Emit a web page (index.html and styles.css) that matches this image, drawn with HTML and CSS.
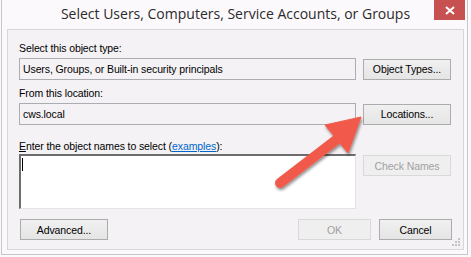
FILE: index.html
```html
<!DOCTYPE html>
<html lang="en">
<head>
  <meta charset="UTF-8">
  <title>Select Users, Computers, Service Accounts, or Groups</title>
  <link rel="stylesheet" href="styles.css">
</head>
<body>
  <div class="window">
    <div class="title-bar">
      <div class="title">Select Users, Computers, Service Accounts, or Groups</div>
      <div class="close-button">
        <svg width="10" height="9" viewBox="0 0 10 9"><path d="M1 1 L9 8 M9 1 L1 8" stroke="#fff" stroke-width="2"/></svg>
      </div>
    </div>

    <div class="panel">
      <div class="label">Select this object type:</div>
      <div class="row">
        <div class="field">Users, Groups, or Built-in security principals</div>
        <button class="btn">Object Types...</button>
      </div>

      <div class="label">From this location:</div>
      <div class="row">
        <div class="field">cws.local</div>
        <button class="btn">Locations...</button>
      </div>

      <div class="label label-names"><u>E</u>nter the object names to select (<a href="#">examples</a>):</div>
      <div class="row row-top">
        <div class="names-box"><span class="caret"></span></div>
        <button class="btn btn-disabled">Check Names</button>
      </div>

      <div class="footer">
        <button class="btn">Advanced...</button>
        <div class="footer-right">
          <button class="btn btn-small btn-disabled">OK</button>
          <button class="btn btn-small">Cancel</button>
        </div>
      </div>

      <!-- resize grip -->
      <svg class="grip" width="9" height="9" viewBox="0 0 9 9">
        <rect x="6" y="0" width="2" height="2" fill="#c4c4c4"/>
        <rect x="3" y="3" width="2" height="2" fill="#c4c4c4"/>
        <rect x="6" y="3" width="2" height="2" fill="#c4c4c4"/>
        <rect x="0" y="6" width="2" height="2" fill="#c4c4c4"/>
        <rect x="3" y="6" width="2" height="2" fill="#c4c4c4"/>
        <rect x="6" y="6" width="2" height="2" fill="#c4c4c4"/>
      </svg>
    </div>

    <!-- callout arrow pointing at Locations... -->
    <svg class="arrow" width="471" height="257" viewBox="0 0 471 257">
      <defs>
        <filter id="shadow" x="-20%" y="-20%" width="140%" height="140%">
          <feDropShadow dx="1" dy="2" stdDeviation="1.6" flood-color="#000" flood-opacity="0.45"/>
        </filter>
      </defs>
      <g filter="url(#shadow)" fill="#f15a4b" stroke="#f15a4b">
        <line x1="279" y1="183" x2="335" y2="140" stroke-width="10" stroke-linecap="round"/>
        <polygon points="360,117 347,153 324,125" stroke-width="1" stroke-linejoin="round"/>
      </g>
    </svg>
  </div>
</body>
</html>
```

FILE: styles.css
```css
body {
  margin: 0;
  background-color: #fcf9fc;
  font-family: "Liberation Sans", Arial, sans-serif;
  font-size: 10.5px;
  letter-spacing: -0.1px;
  color: #000;
}

.window {
  position: relative;
  width: 465px;
  height: 254px;
  margin-left: 1px;
  border: 1px solid #c9c6c9;
  border-top: none;
  background-color: #fcf9fc;
}

.title-bar {
  height: 29px;
  position: relative;
}

.title {
  text-align: center;
  font-family: "Open Sans", "Noto Sans", sans-serif;
  font-size: 14px;
  letter-spacing: 0;
  color: #2b2b2b;
  padding-top: 4px;
  padding-left: 2px;
}

.close-button {
  position: absolute;
  top: 0;
  right: 2px;
  width: 31px;
  height: 20px;
  background-color: #c75050;
  display: flex;
  justify-content: center;
  align-items: center;
}

.panel {
  position: relative;
  margin-left: 5px;
  width: 457px;
  height: 221px;
  box-sizing: border-box;
  border: 1px solid #d8d6d8;
  background-color: #f4f2f4;
  padding: 11px 11px 0 11px;
}

.label {
  height: 14px;
  line-height: 14px;
  margin-bottom: 3px;
}

.label a {
  color: #0066cc;
}

.label-names {
  margin-top: 14px;
  margin-bottom: 1px;
}

.row {
  display: flex;
  align-items: center;
  gap: 7px;
  margin-bottom: 6px;
}

.row-top {
  align-items: flex-start;
  margin-bottom: 10px;
}

.field {
  width: 337px;
  height: 22px;
  box-sizing: border-box;
  border: 1px solid #abadb3;
  background-color: #f4f2f4;
  padding: 0 3px;
  line-height: 20px;
}

.names-box {
  width: 337px;
  height: 55px;
  box-sizing: border-box;
  border-top: 2px solid #6d6d6d;
  border-left: 2px solid #6d6d6d;
  border-right: 1px solid #e3e3e3;
  border-bottom: 1px solid #e3e3e3;
  background-color: #fff;
  padding: 2px 1px;
}

.caret {
  display: block;
  width: 1px;
  height: 13px;
  background-color: #000;
}

.btn {
  width: 88px;
  height: 21px;
  padding: 0;
  font-family: "Liberation Sans", Arial, sans-serif;
  font-size: 10.5px;
  letter-spacing: -0.1px;
  color: #000;
  border: 1px solid #acacac;
  background: linear-gradient(#f0f0f0, #e5e5e5);
}

.row-top .btn {
  margin-top: 1px;
}

.btn-small {
  width: 73px;
}

.btn-disabled {
  color: #a0a0a0;
  border-color: #d9d9d9;
  background: #f0eff0;
}

.footer {
  display: flex;
  justify-content: space-between;
  padding-left: 1px;
}

.footer-right {
  display: flex;
  gap: 8px;
}

.grip {
  position: absolute;
  right: 2px;
  bottom: 2px;
}

.arrow {
  position: absolute;
  top: 0;
  left: -1px;
  pointer-events: none;
}
```
